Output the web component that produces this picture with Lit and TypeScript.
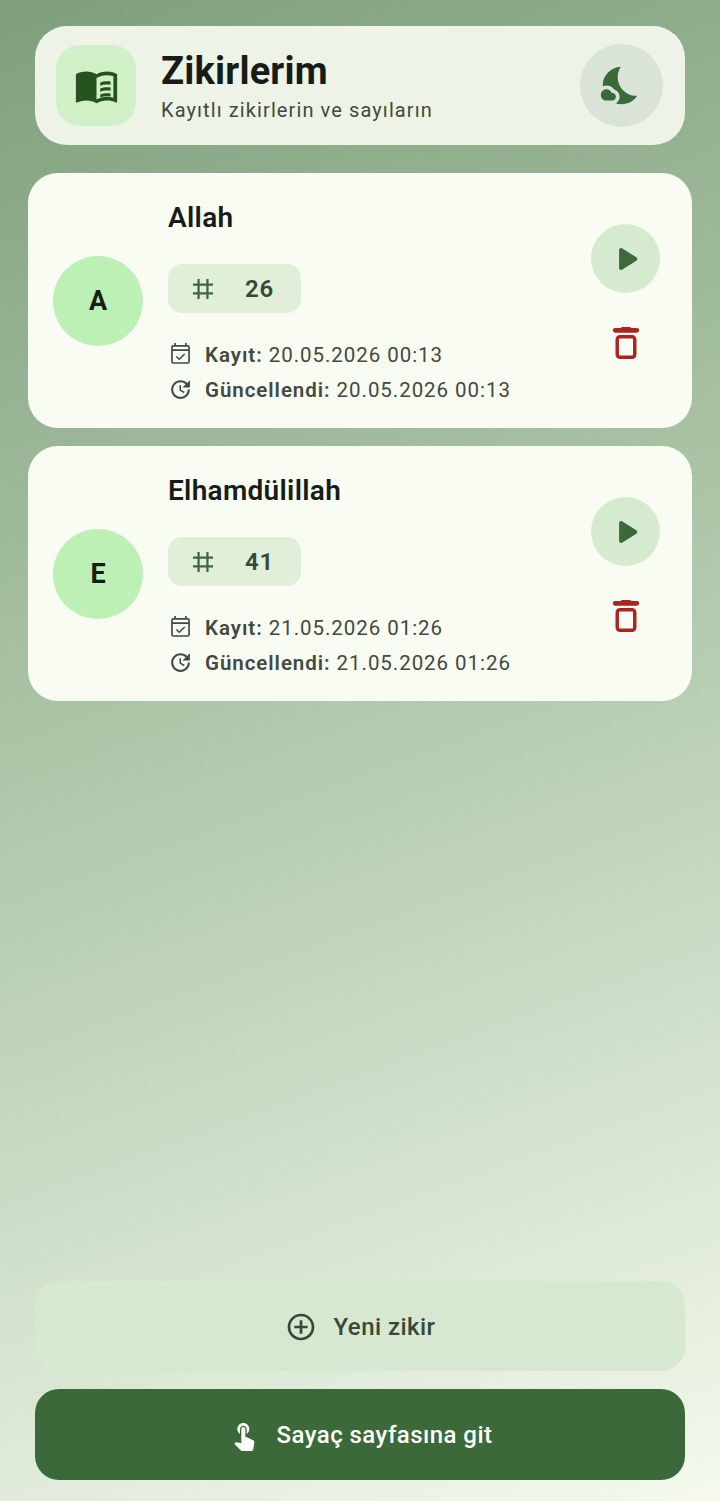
import { LitElement, html, css, svg } from "lit";
import { customElement } from "lit/decorators.js";

const ic = (d: unknown, box = "0 0 24 24") => html`<svg viewBox=${box}>${d}</svg>`;
const book = svg`<path fill-rule="evenodd" d="M21 5c-1.11-.35-2.33-.5-3.5-.5-1.95 0-4.05.4-5.5 1.5-1.45-1.1-3.55-1.5-5.5-1.5S2.45 4.9 1 6v14.65c0 .25.25.5.5.5.1 0 .15-.05.25-.05C3.1 20.45 5.05 20 6.5 20c1.95 0 4.05.4 5.5 1.5 1.35-.85 3.8-1.5 5.5-1.5 1.65 0 3.35.3 4.75 1.05.1.05.15.05.25.05.25 0 .5-.25.5-.5V6c-.6-.45-1.25-.75-2-1zm0 13.5c-1.1-.35-2.3-.5-3.5-.5-1.7 0-4.15.65-5.5 1.5V8c1.35-.85 3.8-1.5 5.5-1.5 1.2 0 2.4.15 3.5.5v11.5z"/><path d="M14 10.4c1.2-.5 3.6-.9 5.5-.5v1.7c-1.8-.4-4-.1-5.5.5zm0 3.2c1.2-.5 3.6-.9 5.5-.5v1.7c-1.8-.4-4-.1-5.5.5zm0 3.2c1.2-.5 3.6-.9 5.5-.5v1.6c-1.8-.4-4-.1-5.5.5z"/>`;
const moon = svg`<path d="M11.1 12.08c-2.33-4.51-.5-8.48.53-10.07C6.27 2.2 1.98 6.59 1.98 12c0 .14.02.28.02.42.62-.27 1.29-.42 2-.42 1.66 0 3.18.83 4.1 2.15 1.67.48 2.9 2.02 2.9 3.85 0 1.52-.87 2.83-2.12 3.51.98.32 2.03.5 3.11.5 3.5 0 6.58-1.8 8.37-4.52-2.36.23-6.98-.97-9.26-5.41z"/><path d="M7 16h-.18C6.4 14.84 5.3 14 4 14c-1.66 0-3 1.34-3 3s1.34 3 3 3h3c1.1 0 2-.9 2-2s-.9-2-2-2z"/>`;
const tag = svg`<path d="M8.2 3.4v17.2M15.8 3.4v17.2M3.4 8.2h17.2M3.4 15.8h17.2" fill="none" stroke="currentColor" stroke-width="1.9"/>`;
const cal = svg`<path d="M19 4h-1V2h-1.6v2H7.6V2H6v2H5a2 2 0 0 0-2 2v14a2 2 0 0 0 2 2h14a2 2 0 0 0 2-2V6a2 2 0 0 0-2-2zm.4 16a.4.4 0 0 1-.4.4H5a.4.4 0 0 1-.4-.4V9.6h14.8zm0-12H4.6V6a.4.4 0 0 1 .4-.4h14a.4.4 0 0 1 .4.4z"/><path d="M8 15l2.8 2.6L16 12.6" fill="none" stroke="currentColor" stroke-width="1.5"/>`;
const upd = svg`<path d="M11 8v5l4.25 2.52.77-1.28-3.52-2.09V8H11zm10 2V3l-2.64 2.64C16.74 4.01 14.49 3 12 3c-4.97 0-9 4.03-9 9s4.03 9 9 9 9-4.03 9-9h-2c0 3.86-3.14 7-7 7s-7-3.14-7-7 3.14-7 7-7c1.93 0 3.68.79 4.95 2.05L14 10h7z"/>`;
const play = svg`<path d="M7.4 6c0-1 1.1-1.6 1.9-1.1l9.6 6c.8.5.8 1.7 0 2.2l-9.6 6c-.8.5-1.9-.1-1.9-1.1z"/>`;
const trash = svg`<path d="M9.5 2c-.4 0-.7.2-.9.6H4.8a1.4 1.4 0 0 0 0 3.2h14.4a1.4 1.4 0 0 0 0-3.2h-3.8c-.2-.4-.5-.6-.9-.6z"/><rect x="6.15" y="8.45" width="11.7" height="13.7" rx="1.8" fill="none" stroke="currentColor" stroke-width="2.3"/>`;
const add = svg`<path d="M13 7h-2v4H7v2h4v4h2v-4h4v-2h-4V7zm-1-5C6.48 2 2 6.48 2 12s4.48 10 10 10 10-4.48 10-10S17.52 2 12 2zm0 18c-4.41 0-8-3.59-8-8s3.59-8 8-8 8 3.59 8 8-3.59 8-8 8z"/>`;
const touch = svg`<path d="M9 11.24V7.5C9 6.12 10.12 5 11.5 5S14 6.12 14 7.5v3.74c1.21-.81 2-2.18 2-3.74C16 5.01 13.99 3 11.5 3S7 5.01 7 7.5c0 1.56.79 2.93 2 3.74zm9.84 4.63l-4.54-2.26c-.17-.07-.35-.11-.54-.11H13v-6c0-.83-.67-1.5-1.5-1.5S10 6.67 10 7.5v10.74l-3.43-.72c-.08-.01-.15-.03-.24-.03-.31 0-.59.13-.79.33l-.79.8 4.94 4.94c.27.27.65.44 1.06.44h6.79c.75 0 1.33-.55 1.44-1.28l.75-5.27c.01-.07.02-.14.02-.2 0-.62-.38-1.16-.91-1.38z"/>`;

const items = [
  { l: "A", name: "Allah", n: 26, a: "20.05.2026 00:13", b: "20.05.2026 00:13" },
  { l: "E", name: "Elhamdülillah", n: 41, a: "21.05.2026 01:26", b: "21.05.2026 01:26" },
];

@customElement("app-root")
export class AppRoot extends LitElement {
  static styles = css`
    :host { display: block; font-family: Roboto, "Noto Sans", sans-serif; }
    svg { fill: currentColor; display: block; flex: none; }
    .page { box-sizing: border-box; height: 1501px; display: flex; flex-direction: column; padding: 26px 28px 21px;
      background: linear-gradient(160deg, #7f9f7c 0%, #b3cbae 50%, #f5f9ee 100%); }
    .head { margin: 0 7px 28px; height: 119px; box-sizing: border-box; padding: 0 21px; display: flex; align-items: center;
      background: #edf4e7; border-radius: 32px; }
    .logo { width: 80px; height: 81px; border-radius: 24px; background: #d1f0c8; color: #25521f; display: flex; align-items: center; justify-content: center; margin-right: 25px; }
    .logo svg { width: 45px; height: 45px; }
    .ht { flex: 1; padding-bottom: 2px; }
    h1 { margin: 0; font-size: 38px; line-height: 46px; font-weight: 700; color: #171d16; letter-spacing: .2px; }
    .sub { margin-top: 4px; font-size: 20px; line-height: 24px; color: #424940; letter-spacing: 1.1px; }
    .theme { width: 83px; height: 83px; border-radius: 50%; background: #dae4d6; color: #3b6939; display: flex; align-items: center; justify-content: center; margin-right: 1px; }
    .theme svg { width: 45px; height: 45px; }
    .card { height: 255px; box-sizing: border-box; margin-bottom: 18px; background: #f8fcf2; border-radius: 30px; display: flex; align-items: center; padding: 0 32px 0 25px; }
    .av { width: 90px; height: 90px; border-radius: 50%; background: #bdf0b4; color: #171d16; display: flex; align-items: center; justify-content: center; font-size: 27px; font-weight: 700; margin-right: 25px; flex: none; }
    .body { flex: 1; align-self: flex-start; padding-top: 27px; }
    .name { font-size: 28px; line-height: 36px; font-weight: 600; color: #171d16; letter-spacing: .3px; }
    .count { width: 133px; height: 49px; box-sizing: border-box; margin-top: 28px; border-radius: 14px; background: #e1efd9; display: flex; align-items: center; padding-left: 21px; color: #3b6939; }
    .count svg { width: 28px; height: 28px; }
    .count span { margin-left: 28px; font-size: 24px; font-weight: 600; color: #394736; letter-spacing: .9px; }
    .meta { margin-top: 29px; display: flex; flex-direction: column; gap: 8.5px; }
    .row { display: flex; align-items: center; height: 26px; color: #424940; font-size: 20.5px; letter-spacing: .95px; }
    .row svg { width: 25px; height: 25px; margin-right: 12px; }
    .row b { font-weight: 600; margin-right: 6px; }
    .acts { display: flex; flex-direction: column; align-items: center; gap: 31px; margin-bottom: 17px; }
    .play { width: 69px; height: 69px; border-radius: 50%; background: #d6ead0; color: #3b6939; display: flex; align-items: center; justify-content: center; }
    .play svg { width: 36px; height: 36px; }
    .del { color: #ac2323; }
    .del svg { width: 36px; height: 36px; }
    .spacer { flex: 1; }
    .btn { margin: 0 7px; border-radius: 24px; display: flex; align-items: center; justify-content: center; font-size: 24px; font-weight: 500; letter-spacing: .45px; }
    .btn svg { width: 32px; height: 32px; margin-right: 17px; }
    .new { height: 90px; box-sizing: border-box; padding-top: 2px; background: #d6e8cf; color: #394736; margin-bottom: 18px; }
    .go { height: 91px; background: #3b6939; color: #fff; }
  `;
  render() {
    return html`<div class="page">
      <header class="head">
        <div class="logo">${ic(book)}</div>
        <div class="ht"><h1>Zikirlerim</h1><div class="sub">Kayıtlı zikirlerin ve sayıların</div></div>
        <div class="theme">${ic(moon)}</div>
      </header>
      ${items.map((i) => html`<section class="card">
        <div class="av">${i.l}</div>
        <div class="body">
          <div class="name">${i.name}</div>
          <div class="count">${ic(tag)}<span>${i.n}</span></div>
          <div class="meta">
            <div class="row">${ic(cal, "0 2 24 24")}<b>Kayıt:</b> ${i.a}</div>
            <div class="row">${ic(upd)}<b>Güncellendi:</b> ${i.b}</div>
          </div>
        </div>
        <div class="acts"><div class="play">${ic(play)}</div><div class="del">${ic(trash)}</div></div>
      </section>`)}
      <div class="spacer"></div>
      <div class="btn new">${ic(add)}Yeni zikir</div>
      <div class="btn go">${ic(touch)}Sayaç sayfasına git</div>
    </div>`;
  }
}
